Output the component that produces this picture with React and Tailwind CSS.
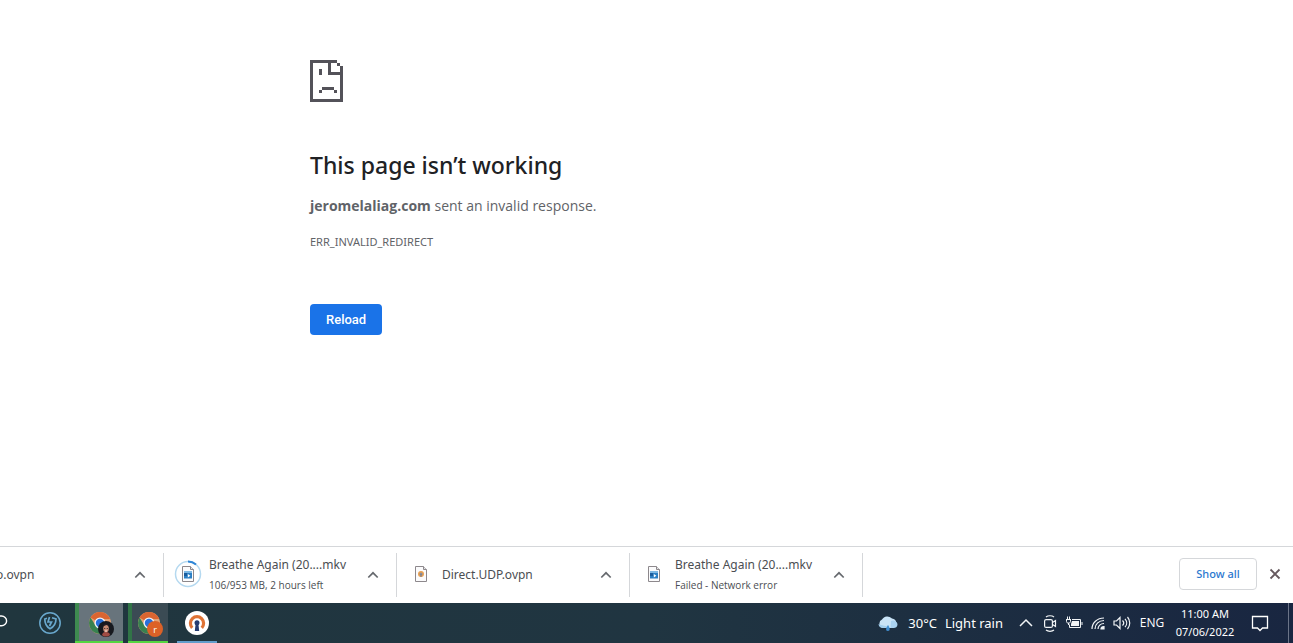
const SAD_PAGE = [
  [0, 0, 9, 1], [0, 0, 1, 14], [0, 13, 11, 1], [10, 2, 1, 12], [9, 1, 1, 1],
  [6, 0, 1, 5], [6, 4, 5, 1], [3, 3, 1, 2], [4, 9, 4, 1], [3, 10, 1, 1], [8, 10, 1, 1],
];

function SadPageIcon() {
  return (
    <svg width="33" height="42" viewBox="0 0 11 14" fill="#535259" shapeRendering="crispEdges" aria-hidden="true">
      {SAD_PAGE.map(([x, y, w, h], i) => (
        <rect key={i} x={x} y={y} width={w} height={h} />
      ))}
    </svg>
  );
}

function Chevron() {
  return (
    <svg width="12" height="8" viewBox="0 0 12 8" fill="none" stroke="#66696e" strokeWidth="1.700" aria-hidden="true">
      <path d="M1.300 6.500 6 1.800l4.700 4.700" />
    </svg>
  );
}

function FileSheet({ children }) {
  return (
    <svg width="14" height="18" viewBox="0 0 14 18" aria-hidden="true">
      <path d="M1.500 1.500h8l3 3v12h-11z" fill="#fbfbfc" stroke="#8d888c" />
      <path d="M9.500 1.500v3h3" fill="#e4e4e6" stroke="#8d888c" />
      {children}
    </svg>
  );
}

function VideoFile() {
  return (
    <FileSheet>
      <rect x="3" y="6" width="8" height="7.500" fill="#2b7fc4" />
      <rect x="3" y="6" width="8" height="2" fill="#7db8e4" />
      <rect x="3" y="8" width="3" height="3" fill="#1b5c9c" />
      <path d="M6.800 9v3.400l2.600-1.700z" fill="#fff" />
    </FileSheet>
  );
}

function VpnFile() {
  return (
    <FileSheet>
      <circle cx="7" cy="9" r="2.300" fill="#8b8f9b" stroke="#eba04f" strokeWidth="1.400" />
      <path d="M6.500 9h1v3h-1z" fill="#777b8c" />
    </FileSheet>
  );
}

function ProgressRing({ children }) {
  return (
    <span className="relative flex size-7 items-center justify-center">
      <svg className="absolute inset-0" width="28" height="28" viewBox="0 0 28 28" fill="none" strokeWidth="1.500" aria-hidden="true">
        <circle cx="14" cy="14" r="12.500" stroke="#b5d9f0" />
        <path d="M14 1.500A12.500 12.500 0 0 1 22 4.400" stroke="#2f86d6" strokeWidth="2" />
      </svg>
      {children}
    </span>
  );
}

function Download({ icon, name, status }) {
  return (
    <li className="flex h-11 w-[233px] shrink-0 items-center border-r border-[#d5d7da] pr-[15px] pl-[10px]">
      <span className="mr-[7px] flex w-7 shrink-0 justify-center pb-[2px]">{icon}</span>
      <span className="flex flex-1 flex-col whitespace-nowrap">
        <span className="font-['Noto_Sans',sans-serif] text-[12px] leading-5 text-[#4b4e52]">{name}</span>
        {status && <span className="text-[10px] leading-5 text-[#4b4e52]">{status}</span>}
      </span>
      <button type="button" aria-label={`Options for ${name}`} className="flex h-6 w-4 items-center justify-center">
        <Chevron />
      </button>
    </li>
  );
}

function ChromeLogo() {
  return (
    <>
      <circle cx="12" cy="12" r="11" fill="#e3a276" />
      <path d="M12 12 2.500 6.500A11 11 0 0 1 21.500 6.500L22 8H12z" fill="#db6531" />
      <path d="M12 12 7.500 14.500 2.500 6.500A11 11 0 0 0 12 23l4-8z" fill="#388150" />
      <circle cx="12" cy="12" r="5.500" fill="#f2f5fa" />
      <circle cx="12" cy="12" r="4.200" fill="#2870dc" />
    </>
  );
}

function ChromeProfile() {
  return (
    <svg width="26" height="26" viewBox="0 0 26 26" aria-hidden="true">
      <ChromeLogo />
      <circle cx="18" cy="18" r="8" fill="#17191f" />
      <path d="M14 24c1-3 2-3 4-3s4 1 4 3c-2 2-6 2-8 0z" fill="#a04b43" />
      <ellipse cx="18" cy="17.500" rx="2.800" ry="3.800" fill="#c98d75" />
      <path d="M15 15.500c0-4 6-4 6 0l-2-1.500-2 .5z" fill="#241d22" />
      <path d="M16 17.500h1.300m1.400 0h1.300" stroke="#33272b" strokeWidth=".8" />
      <path d="M17 20h2" stroke="#f0dfd8" />
    </svg>
  );
}

function ChromeLetter() {
  return (
    <span className="relative block">
      <svg width="26" height="26" viewBox="0 0 26 26" aria-hidden="true">
        <ChromeLogo />
        <circle cx="18" cy="18" r="8" fill="#dc6127" />
      </svg>
      <span className="absolute right-0 bottom-0 flex size-4 items-center justify-center text-[9px] leading-none text-white">r</span>
    </span>
  );
}

function Tray({ label, children }) {
  return (
    <button type="button" aria-label={label} className="flex h-10 w-6 items-center justify-center">
      <svg width="18" height="18" viewBox="0 0 18 18" fill="none" stroke="#f1f4f6" strokeWidth="1.200" aria-hidden="true">
        {children}
      </svg>
    </button>
  );
}

function Taskbar() {
  return (
    <footer className="flex h-10 items-center justify-between overflow-hidden bg-linear-to-r from-[#20363e] via-[#203541] to-[#192641] text-white">
      <nav aria-label="Taskbar" className="flex h-10 items-center">
        <button type="button" aria-label="Search" className="flex w-[25px] items-center pb-1">
          <svg width="8" height="14" viewBox="0 0 8 14" fill="none" stroke="#fff" strokeWidth="1.400" aria-hidden="true">
            <path d="M0 2h1.500a5 4.800 0 0 1 0 9.800H0" />
          </svg>
        </button>
        <button type="button" aria-label="Security" className="flex h-10 w-[50px] items-center justify-center">
          <svg width="24" height="24" viewBox="0 0 24 24" fill="none" stroke="#69a8cd" strokeWidth="1.500" aria-hidden="true">
            <circle cx="12" cy="12" r="10.200" />
            <path d="M9 7.300 6.800 8c0 5 1.200 7.500 5.200 9.800 4.500-2.300 6-5.300 6-9.800l-4-1.200" strokeWidth="1.700" />
            <path d="m11.500 6-1.500 5h3.500L11.500 15" strokeWidth="1.700" />
          </svg>
        </button>
        <button type="button" aria-label="Chrome, first profile" className="mr-[5px] flex h-10 w-12 items-center justify-center border-b-2 border-[#54d641] bg-[#68747c] bg-[linear-gradient(90deg,#3e8a50_0_4px,transparent_4px)] pt-1 pl-1">
          <ChromeProfile />
        </button>
        <button type="button" aria-label="Chrome, second profile" className="mr-[9px] flex h-10 w-10 items-center justify-center border-b-2 border-[#54d641] bg-[#3b4b54] bg-[linear-gradient(90deg,#317447_0_4px,transparent_4px)] pt-1 pl-1">
          <ChromeLetter />
        </button>
        <button type="button" aria-label="OpenVPN Connect" className="flex h-10 w-10 items-center justify-center border-b-2 border-[#629dcc] pt-[2px]">
          <svg width="24" height="24" viewBox="0 0 24 24" aria-hidden="true">
            <circle cx="12" cy="12" r="12" fill="#fff" />
            <path d="M7.200 16.800A6.600 6.600 0 1 1 16.800 16.800" fill="none" stroke="#df7335" strokeWidth="3.200" />
            <circle cx="12" cy="11.800" r="2.500" fill="#253c70" />
            <path d="M10.700 12h2.600l.900 8H9.800z" fill="#253c70" />
          </svg>
        </button>
      </nav>
      <div className="flex h-10 items-center">
        <button type="button" className="mr-[11px] flex items-center font-['Noto_Sans',sans-serif] text-[13px] leading-5">
          <svg className="mr-[10px]" width="20" height="16" viewBox="0 0 20 16" aria-hidden="true">
            <path d="M5 13a4.500 4.500 0 0 1-1-8.500A6 5.500 0 0 1 14 3.500 5 5 0 0 1 15.500 13z" fill="#c9e4f7" />
            <path d="M13 6a4.500 4.500 0 0 1 6.500 3c0 3-2 4-4 4h-3z" fill="#a9d2f0" />
            <path d="M5 13a4.500 4.500 0 0 1-4.500-4c3 2 8 1 11 4z" fill="#a3cfee" />
            <path d="M10 10c2 2.500 2.500 6-.2 6S8 12.500 10 10z" fill="#418fd1" />
          </svg>
          <span className="mr-2">30°C</span>
          <span>Light rain</span>
        </button>
        <Tray label="Show hidden icons"><path d="m3 12 6-6 6 6" strokeWidth="1.500" /></Tray>
        <Tray label="Meet now">
          <rect x="3.600" y="5.600" width="7.800" height="7.800" rx="1.500" />
          <path d="m11.500 8.500 3-2v6l-3-2M5 3c2-1.700 6-1.700 8 0M5 16c2 1.700 6 1.700 8 0" />
        </Tray>
        <Tray label="Battery">
          <path d="M7 5.500h8.500v8H4.500v-3M17 8v3" strokeWidth="1" />
          <path d="M7 7h7v5H6v-2z" fill="#f1f4f6" stroke="none" />
          <path d="M2.500 2.500V5m2-2.500V5M1 5.500h5M1.500 5.500v2c0 1 .5 1.500 2 1.500s2-.5 2-1.500v-2M3.500 9v2" strokeWidth="1" />
        </Tray>
        <Tray label="Wi-Fi">
          <path d="M3 15C3 9 8 4 15 4M6 15c0-5 4-8.500 9-8.500M9 15c0-3 2.500-5.500 6-5.500" />
          <path d="M12 15c0-1.500 1-2.500 3-2.500V15z" fill="#f1f4f6" />
        </Tray>
        <Tray label="Volume">
          <path d="M1 7h2.500L7 3.500v11L3.500 11H1zM9.500 6.500c1.500 1.500 1.500 3.500 0 5M12 4.800c2.200 2.500 2.200 6 0 8.400M14.500 3c3 3.500 3 8.500 0 12" />
        </Tray>
        <button type="button" className="w-9 text-[12px] leading-4">ENG</button>
        <button type="button" className="w-[70px] font-['Noto_Sans',sans-serif] text-[11px] leading-[18px]">
          <time dateTime="11:00" className="block">11:00 AM</time>
          <time dateTime="2022-06-07" className="block">07/06/2022</time>
        </button>
        <button type="button" aria-label="Notifications" className="flex h-10 w-10 items-center justify-center">
          <svg width="18" height="18" viewBox="0 0 18 18" fill="none" stroke="#fff" strokeWidth="1.300" aria-hidden="true">
            <path d="M1.500 2.500h15v11.500h-5L9 16.500 6.500 14h-5z" />
          </svg>
        </button>
        <button type="button" aria-label="Show desktop" className="ml-2 h-10 w-[5px] border-l border-[#6b7488]" />
      </div>
    </footer>
  );
}

export default function App() {
  return (
    <div className="flex min-h-screen flex-col bg-white font-['Open_Sans','Noto_Sans',sans-serif]">
      <main className="mx-auto w-full max-w-[673px] flex-1 pt-[60px] text-[#5f6368]">
        <SadPageIcon />
        <h1 className="mt-12 font-['Noto_Sans',sans-serif] text-[23px] leading-[30px] font-medium text-[#202124]">This page isn’t working</h1>
        <p className="mt-4 text-[14px] leading-5"><strong className="font-bold">jeromelaliag.com</strong> sent an invalid response.</p>
        <p className="mt-4 font-['Noto_Sans',sans-serif] text-[11px] leading-5">ERR_INVALID_REDIRECT</p>
        <button type="button" className="mt-[52px] block h-[31px] rounded-[4px] bg-[#1a73e8] px-4 font-['Roboto',sans-serif] text-[13px] leading-4 font-medium text-white">Reload</button>
      </main>
      <section aria-label="Downloads" className="flex h-[57px] items-center overflow-hidden border-t border-[#d5d7da]">
        <ul className="flex min-w-0 flex-1 overflow-hidden">
          <li className="flex h-11 w-[164px] shrink-0 items-center justify-between overflow-hidden border-r border-[#d5d7da] pr-[15px]">
            <span className="-ml-1 font-['Noto_Sans',sans-serif] text-[12px] leading-5 text-[#4b4e52]">o.ovpn</span>
            <button type="button" aria-label="Download options" className="flex h-6 w-4 items-center justify-center"><Chevron /></button>
          </li>
          <Download icon={<ProgressRing><VideoFile /></ProgressRing>} name="Breathe Again (20....mkv" status="106/953 MB, 2 hours left" />
          <Download icon={<VpnFile />} name="Direct.UDP.ovpn" />
          <Download icon={<VideoFile />} name="Breathe Again (20....mkv" status="Failed - Network error" />
        </ul>
        <button type="button" className="mb-[2px] h-8 w-[78px] rounded-[4px] border border-[#d5d7da] font-['Noto_Sans',sans-serif] text-[11px] leading-4 font-medium text-[#2b78cf]">Show all</button>
        <button type="button" aria-label="Close downloads bar" className="mr-2 ml-2 flex size-5 items-center justify-center pb-[2px]">
          <svg width="12" height="12" viewBox="0 0 12 12" stroke="#66595e" strokeWidth="1.800" aria-hidden="true">
            <path d="m1.500 1.500 9 9m0-9-9 9" />
          </svg>
        </button>
      </section>
      <Taskbar />
    </div>
  );
}
